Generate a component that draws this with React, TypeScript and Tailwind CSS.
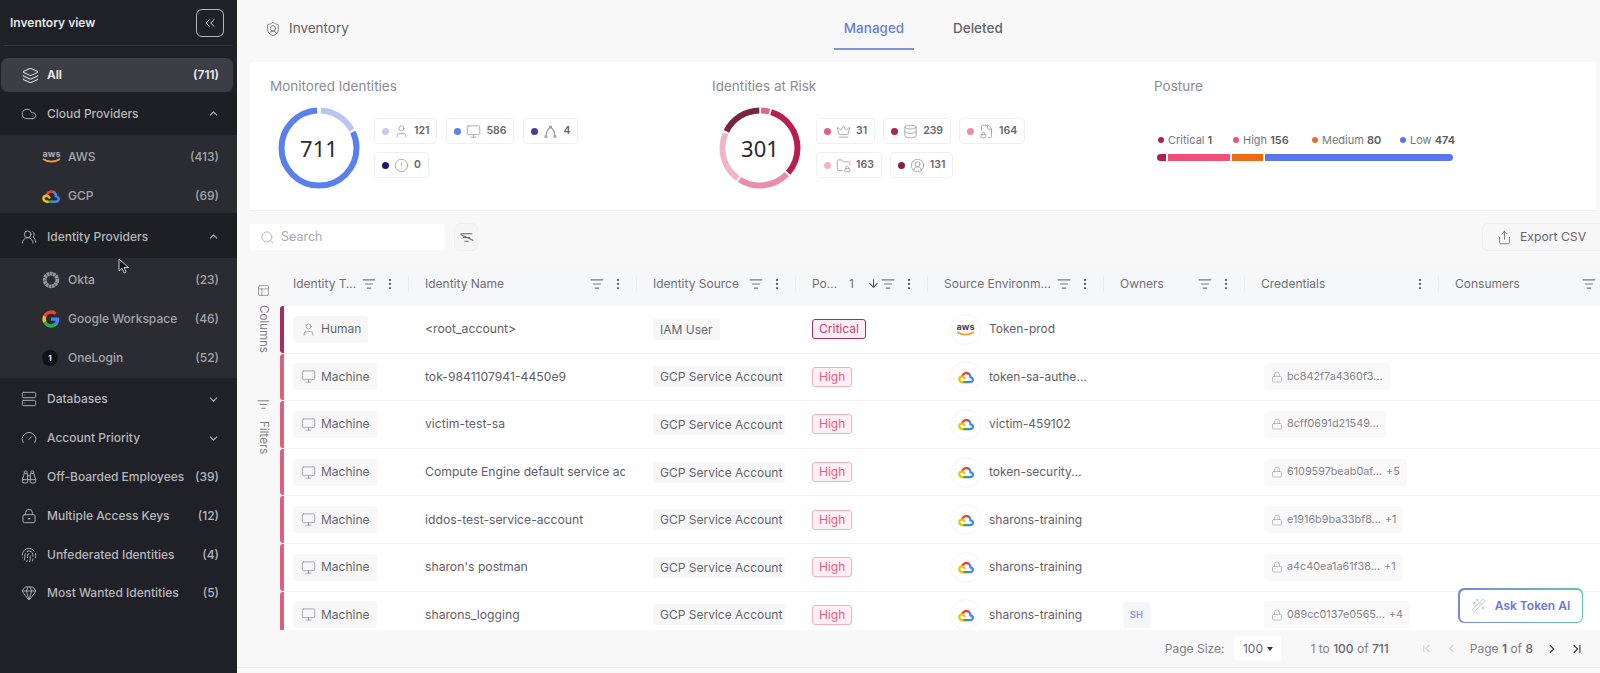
import type { ReactNode } from 'react'
import {
  ArrowDown,
  Binoculars,
  ChevronDown,
  ChevronFirst,
  ChevronLast,
  ChevronLeft,
  ChevronRight,
  ChevronsLeft,
  ChevronUp,
  CircleAlert,
  CircleUserRound,
  Cloud,
  Crown,
  Database,
  EllipsisVertical,
  FileLock2,
  Fingerprint,
  FolderLock,
  Gauge,
  Gem,
  Layers,
  ListFilter,
  Lock,
  LockKeyhole,
  Monitor,
  PanelsTopLeft,
  Search,
  Server,
  Share,
  ShieldUser,
  User,
  UsersRound,
  WandSparkles,
} from 'lucide-react'

function GcpLogo({ size = 18 }: { size?: number }) {
  return (
    <svg width={size} height={size} viewBox="0 0 24 24" fill="none" strokeWidth={3.4} strokeLinecap="round">
      <path d="M6.5 10A6.5 6.5 0 0 1 16.5 7.4" stroke="#ea4335" />
      <path d="M16.5 7.4C18 8.8 18.6 10.4 18.6 12.4C21.6 13 22.6 15 22.2 16.8C21.7 18.6 20 19.6 18 19.6H12.5" stroke="#4285f4" />
      <path d="M12.5 19.6H7" stroke="#34a853" />
      <path d="M7 19.6C3.8 19.6 1.8 17.4 2 15C2.3 12.6 4.2 11.4 6.2 11.6C8 11.8 9.2 12.8 9.8 14" stroke="#fbbc05" />
    </svg>
  )
}

function GoogleLogo() {
  return (
    <svg width={18} height={18} viewBox="0 0 24 24">
      <path fill="#4285f4" d="M23 12.3c0-.8-.1-1.600-.2-2.300H12v4.400h6.200a5.300 5.300 0 0 1-2.300 3.500v2.900h3.700c2.100-2 3.400-4.900 3.400-8.500z" />
      <path fill="#34a853" d="M12 23.500c3.100 0 5.700-1 7.600-2.800l-3.700-2.900c-1 .7-2.300 1.100-3.900 1.100-3 0-5.500-2-6.400-4.700H1.800v2.900A11.500 11.500 0 0 0 12 23.500z" />
      <path fill="#fbbc05" d="M5.600 14.200a6.900 6.900 0 0 1 0-4.400V6.900H1.800a11.500 11.500 0 0 0 0 10.200z" />
      <path fill="#ea4335" d="M12 5.100c1.700 0 3.200.6 4.400 1.700l3.300-3.300A11.100 11.100 0 0 0 12 .5 11.500 11.500 0 0 0 1.800 6.900l3.800 2.900C6.500 7.100 9 5.100 12 5.100z" />
    </svg>
  )
}

function AwsLogo({ dark }: { dark?: boolean }) {
  return (
    <span className="flex w-[19px] flex-col items-center leading-none">
      <span className={`text-[9px] font-bold leading-[8px] ${dark ? 'text-[#a9aaae]' : 'text-[#444]'}`}>aws</span>
      <svg width={19} height={5} viewBox="0 0 19 5" fill="none">
        <path d="M1 1C6 4.500 13 4.500 18 1" stroke="#f59e2c" strokeWidth={1.6} />
      </svg>
    </span>
  )
}

function OktaLogo() {
  return (
    <svg width={18} height={18} viewBox="0 0 18 18" fill="none">
      <circle cx={9} cy={9} r={6.300} stroke="#96979b" strokeWidth={3.800} strokeDasharray="2.500 0.600" />
    </svg>
  )
}

function OneLoginLogo() {
  return (
    <span className="flex h-[16px] w-[16px] items-center justify-center rounded-full bg-[#111216] text-[8px] font-bold text-white">
      1
    </span>
  )
}

function SidebarRow({
  icon,
  label,
  count,
  open,
  className = '',
}: {
  icon: ReactNode
  label: string
  count?: string
  open?: boolean
  className?: string
}) {
  return (
    <div className={`flex items-center pl-[21px] pr-[18px] text-[12px] font-medium text-[#b6b7bb] ${className}`}>
      <span className="flex w-[26px] shrink-0 items-center text-[#a9aaae]">{icon}</span>
      <span className="flex-1 whitespace-nowrap">{label}</span>
      {count && <span>{count}</span>}
      {open === true && <ChevronUp className="mr-[-1px] h-[13px] w-[13px]" />}
      {open === false && <ChevronDown className="mr-[-1px] h-[13px] w-[13px]" />}
    </div>
  )
}

function SubRow({ icon, label, count }: { icon: ReactNode; label: string; count: string }) {
  return (
    <div className="flex h-[39px] items-center pl-[42px] pr-[18px] text-[12px] font-medium text-[#a5a6aa]">
      <span className="flex w-[26px] shrink-0 items-center">{icon}</span>
      <span className="flex-1 whitespace-nowrap">{label}</span>
      <span>{count}</span>
    </div>
  )
}

function Sidebar() {
  const ic = 'h-[16px] w-[16px]'
  return (
    <aside className="relative h-full w-[237px] shrink-0 bg-[#202126]">
      <div className="mx-[4px] flex h-[46px] items-center justify-between border-b border-[#33343a] pl-[6px] pr-[9px] text-[12px] font-semibold text-[#e4e5e7]">
        <span>Inventory view</span>
        <button type="button" className="flex h-[28px] w-[28px] items-center justify-center rounded-[6px] border border-[#b5b6ba] text-[#d4d5d8]">
          <ChevronsLeft className="h-[16px] w-[16px]" strokeWidth={1.5} />
        </button>
      </div>
      <div className="px-px pt-[12px]">
        <div className="flex h-[34px] w-[232px] items-center rounded-[7px] bg-[#3c3d45] pl-[21px] pr-[14px] text-[12px] font-semibold text-[#f0f0f2]">
          <Layers className="mr-[8px] h-[17px] w-[17px] text-[#d6d7da]" strokeWidth={1.5} />
          <span className="flex-1">All</span>
          <span>(711)</span>
        </div>
      </div>
      <SidebarRow className="h-[43px] bg-[#1e1f23]" icon={<Cloud className={ic} strokeWidth={1.5} />} label="Cloud Providers" open />
      <div className="h-[78px] bg-[#2b2c31] pt-[2px]">
        <SubRow icon={<AwsLogo dark />} label="AWS" count="(413)" />
        <SubRow icon={<GcpLogo />} label="GCP" count="(69)" />
      </div>
      <SidebarRow className="h-[45px] bg-[#1e1f23] pt-[2px]" icon={<UsersRound className={ic} strokeWidth={1.5} />} label="Identity Providers" open />
      <div className="h-[120px] bg-[#2b2c31] pt-[2px]">
        <SubRow icon={<OktaLogo />} label="Okta" count="(23)" />
        <SubRow icon={<GoogleLogo />} label="Google Workspace" count="(46)" />
        <SubRow icon={<OneLoginLogo />} label="OneLogin" count="(52)" />
      </div>
      <div className="pt-[2px]">
        <SidebarRow className="h-[38.800px]" icon={<Server className={ic} strokeWidth={1.5} />} label="Databases" open={false} />
        <SidebarRow className="h-[38.800px]" icon={<Gauge className={ic} strokeWidth={1.5} />} label="Account Priority" open={false} />
        <SidebarRow className="h-[38.800px]" icon={<Binoculars className={ic} strokeWidth={1.5} />} label="Off-Boarded Employees" count="(39)" />
        <SidebarRow className="h-[38.800px]" icon={<LockKeyhole className={ic} strokeWidth={1.5} />} label="Multiple Access Keys" count="(12)" />
        <SidebarRow className="h-[38.800px]" icon={<Fingerprint className={ic} strokeWidth={1.5} />} label="Unfederated Identities" count="(4)" />
        <SidebarRow className="h-[38.800px]" icon={<Gem className={ic} strokeWidth={1.5} />} label="Most Wanted Identities" count="(5)" />
      </div>
      {/* mouse pointer caught in the screenshot */}
      <svg className="absolute left-[118px] top-[258px]" width={12} height={16} viewBox="0 0 12 16">
        <path d="M1 1V13L4 10.300L6.200 15L8.200 14L6 9.500H10.500Z" fill="#15161a" stroke="#c9cacd" strokeWidth={1} />
      </svg>
    </aside>
  )
}

function Donut({ value, segments }: { value: string; segments: { from: number; to: number; color: string }[] }) {
  return (
    <div className="relative h-[82px] w-[82px] shrink-0">
      <svg width={82} height={82} viewBox="0 0 82 82" fill="none" className="-rotate-90">
        {segments.map((s) => (
          <circle
            key={s.from}
            cx={41}
            cy={41}
            r={37.500}
            stroke={s.color}
            strokeWidth={6}
            pathLength={100}
            strokeDasharray={`${s.to - s.from} ${100 - (s.to - s.from)}`}
            strokeDashoffset={-s.from}
          />
        ))}
      </svg>
      <span className="absolute inset-0 flex items-center justify-center font-['Noto_Sans',sans-serif] text-[22px] text-[#2a2a2d]">
        {value}
      </span>
    </div>
  )
}

function StatChip({ dot, icon, value }: { dot: string; icon: ReactNode; value: string }) {
  return (
    <div className="flex h-[26px] items-center gap-[5px] rounded-[4px] border border-[#eeeff1] bg-white px-[7px] text-[10.500px] font-semibold text-[#66676b]">
      <span className={`h-[7px] w-[7px] rounded-full ${dot}`} />
      <span className="flex items-center text-[#9a9ba0]">{icon}</span>
      <span>{value}</span>
    </div>
  )
}

function BranchIcon() {
  return (
    <svg width={15} height={15} viewBox="0 0 15 15" fill="none" stroke="#9a9ba0" strokeWidth={1.200}>
      <path d="M3 12C3 7.500 5 5 7.500 3C10 5 12 7.500 12 12" />
      <circle cx={7.500} cy={3} r={1} />
      <circle cx={3} cy={12.500} r={1} />
      <circle cx={12} cy={12.500} r={1} />
    </svg>
  )
}

function SummaryCard() {
  const ic = 'h-[15px] w-[15px]'
  return (
    <section className="ml-[13px] mr-[4px] flex h-[149px] border-b border-[#eeeff1] bg-white pl-[20px]">
      <div className="w-[442px] pt-[15px]">
        <h3 className="text-[13.500px] leading-[18px] text-[#8b8c90]">Monitored Identities</h3>
        <div className="ml-[8px] mt-[12px] flex gap-[14px]">
          <Donut
            value="711"
            segments={[
              { from: 0.800, to: 17, color: '#b9c6f3' },
              { from: 18, to: 99.200, color: '#5a80ee' },
            ]}
          />
          <div className="flex w-[220px] flex-wrap content-start gap-x-[9px] gap-y-[8px] pt-[11px]">
            <StatChip dot="bg-[#c5cdf0]" icon={<User className={ic} strokeWidth={1.300} />} value="121" />
            <StatChip dot="bg-[#5a80ee]" icon={<Monitor className={ic} strokeWidth={1.300} />} value="586" />
            <StatChip dot="bg-[#3d429c]" icon={<BranchIcon />} value="4" />
            <StatChip dot="bg-[#1a1a6e]" icon={<CircleAlert className={ic} strokeWidth={1.300} />} value="0" />
          </div>
        </div>
      </div>
      <div className="w-[442px] pt-[15px]">
        <h3 className="text-[13.500px] leading-[18px] text-[#8b8c90]">Identities at Risk</h3>
        <div className="ml-[7px] mt-[12px] flex gap-[15px]">
          <Donut
            value="301"
            segments={[
              { from: 0.500, to: 4, color: '#d8668a' },
              { from: 4.800, to: 36.500, color: '#b81e50' },
              { from: 37.300, to: 59.200, color: '#e88fa8' },
              { from: 60, to: 81.500, color: '#f0b5c5' },
              { from: 82.300, to: 99.700, color: '#7a2440' },
            ]}
          />
          <div className="flex w-[220px] flex-wrap content-start gap-x-[8px] gap-y-[8px] pt-[11px]">
            <StatChip dot="bg-[#e0607f]" icon={<Crown className={ic} strokeWidth={1.300} />} value="31" />
            <StatChip dot="bg-[#b0204f]" icon={<Database className={ic} strokeWidth={1.300} />} value="239" />
            <StatChip dot="bg-[#e88fa8]" icon={<FileLock2 className={ic} strokeWidth={1.300} />} value="164" />
            <StatChip dot="bg-[#f0b5c5]" icon={<FolderLock className={ic} strokeWidth={1.300} />} value="163" />
            <StatChip dot="bg-[#7a2440]" icon={<CircleUserRound className={ic} strokeWidth={1.300} />} value="131" />
          </div>
        </div>
      </div>
      <div className="flex-1 pt-[15px]">
        <h3 className="text-[13.500px] leading-[18px] text-[#8b8c90]">Posture</h3>
        <div className="ml-[3px] mt-[38px] flex h-[14px] items-center text-[11px] text-[#77787c]">
          <span className="ml-[1px] h-[6px] w-[6px] rounded-full bg-[#b0204f]" />
          <span className="ml-[4px] w-[65px]">Critical <b className="font-semibold text-[#5c5d61]">1</b></span>
          <span className="h-[6px] w-[6px] rounded-full bg-[#e8557c]" />
          <span className="ml-[4px] w-[69px]">High <b className="font-semibold text-[#5c5d61]">156</b></span>
          <span className="h-[6px] w-[6px] rounded-full bg-[#ee6a24]" />
          <span className="ml-[4px] w-[78px]">Medium <b className="font-semibold text-[#5c5d61]">80</b></span>
          <span className="h-[6px] w-[6px] rounded-full bg-[#5a74ee]" />
          <span className="ml-[4px]">Low <b className="font-semibold text-[#5c5d61]">474</b></span>
        </div>
        <div className="ml-[3px] mt-[7px] flex h-[7px] w-[296px] gap-[2px]">
          <span className="w-[9px] rounded-l-full bg-[#b0204f]" />
          <span className="w-[62px] bg-[#ef4f78]" />
          <span className="w-[31px] bg-[#ee6a14]" />
          <span className="flex-1 rounded-r-full bg-[#5a78ee]" />
        </div>
      </div>
    </section>
  )
}

function HeaderCell({
  label,
  filter = true,
  extra,
  menu = true,
  first,
}: {
  label: string
  filter?: boolean
  extra?: ReactNode
  menu?: boolean
  first?: boolean
}) {
  return (
    <div className={`flex min-w-0 items-center pr-[4px] ${first ? 'pl-[13px]' : 'pl-[12px]'}`}>
      <span className="min-w-0 flex-1 truncate text-[12px] text-[#6f7074]">{label}</span>
      {extra}
      {filter && <ListFilter className="ml-px h-[14px] w-[14px] shrink-0 text-[#77787c]" />}
      {menu && (
        <>
          <EllipsisVertical className="ml-[7px] h-[14px] w-[14px] shrink-0 text-[#66676b]" />
          <span className="ml-[11px] h-[16px] w-px shrink-0 bg-[#eceded]" />
        </>
      )}
    </div>
  )
}

type Row = {
  type: 'Human' | 'Machine'
  name: string
  source: string
  posture: 'Critical' | 'High'
  cloud: 'aws' | 'gcp'
  env: string
  owner?: string
  cred?: string
  more?: string
}

const gsa = 'GCP Service Account'
const rows: Row[] = [
  { type: 'Human', name: '<root_account>', source: 'IAM User', posture: 'Critical', cloud: 'aws', env: 'Token-prod' },
  { type: 'Machine', name: 'tok-9841107941-4450e9', source: gsa, posture: 'High', cloud: 'gcp', env: 'token-sa-authentication', cred: 'bc842f7a4360f3...' },
  { type: 'Machine', name: 'victim-test-sa', source: gsa, posture: 'High', cloud: 'gcp', env: 'victim-459102', cred: '8cff0691d21549...' },
  { type: 'Machine', name: 'Compute Engine default service account', source: gsa, posture: 'High', cloud: 'gcp', env: 'token-security-training', cred: '6109597beab0af...', more: '+5' },
  { type: 'Machine', name: 'iddos-test-service-account', source: gsa, posture: 'High', cloud: 'gcp', env: 'sharons-training', cred: 'e1916b9ba33bf8...', more: '+1' },
  { type: 'Machine', name: "sharon's postman", source: gsa, posture: 'High', cloud: 'gcp', env: 'sharons-training', cred: 'a4c40ea1a61f38...', more: '+1' },
  { type: 'Machine', name: 'sharons_logging', source: gsa, posture: 'High', cloud: 'gcp', env: 'sharons-training', owner: 'SH', cred: '089cc0137e0565...', more: '+4' },
]

const gridCols = 'grid grid-cols-[133px_228px_159px_132px_176px_141px_194px_1fr]'

function TableRow({ row }: { row: Row }) {
  const critical = row.posture === 'Critical'
  return (
    <div className={`relative h-[47.600px] items-center border-b border-[#f0f1f2] bg-white ${gridCols}`}>
      <span className={`absolute inset-y-0 left-0 w-[3.500px] rounded-l-[3px] ${critical ? 'bg-[#a42d5f]' : 'bg-[#dd5f7e]'}`} />
      <div className="flex items-center pl-[13px]">
        <span className="flex h-[27px] items-center gap-[5px] rounded-[4px] bg-[#f7f7f8] pl-[8px] pr-[7px] text-[12px] text-[#66676b]">
          {row.type === 'Human' ? (
            <User className="h-[15px] w-[15px] text-[#98999d]" strokeWidth={1.300} />
          ) : (
            <Monitor className="h-[15px] w-[15px] text-[#98999d]" strokeWidth={1.300} />
          )}
          {row.type}
        </span>
      </div>
      <div className="mr-[16px] overflow-hidden whitespace-nowrap pl-[12px] text-[12.200px] text-[#5f6064]">{row.name}</div>
      <div className="flex items-center pl-[12px]">
        <span className="h-[21px] max-w-[132px] overflow-hidden whitespace-nowrap rounded-[3px] bg-[#f7f7f8] px-[7px] text-[12px] leading-[21px] text-[#66676b]">
          {row.source}
        </span>
      </div>
      <div className="flex items-center pl-[12px]">
        <span
          className={`flex h-[20px] items-center rounded-[3px] border px-[6px] text-[12px] ${
            critical ? 'border-[#a42d5f] bg-[#fdeef3] text-[#c2456f]' : 'border-[#f3aebf] bg-[#fff0f3] text-[#e2607f]'
          }`}
        >
          {row.posture}
        </span>
      </div>
      <div className="flex items-center gap-[8px] pl-[18px]">
        <span className="flex h-[31px] w-[31px] shrink-0 items-center justify-center rounded-full border border-[#f6f6f7]">
          {row.cloud === 'aws' ? <AwsLogo /> : <GcpLogo size={16} />}
        </span>
        <span className="max-w-[98px] truncate text-[12px] text-[#5f6064]">{row.env}</span>
      </div>
      <div className="pl-[15px]">
        {row.owner && (
          <span className="flex h-[26px] w-[27px] items-center justify-center rounded-[3px] bg-[#f5f6fb] text-[9.500px] font-semibold text-[#8a98dc]">
            {row.owner}
          </span>
        )}
      </div>
      <div className="flex items-center pl-[15px]">
        {row.cred && (
          <span className="flex h-[27px] items-center gap-[4px] rounded-[4px] bg-[#f9f9fa] px-[7px] text-[10.800px] text-[#85868a]">
            <Lock className="h-[12px] w-[12px] text-[#a5a6aa]" strokeWidth={1.300} />
            {row.cred}
            {row.more && <span>{row.more}</span>}
          </span>
        )}
      </div>
      <div />
    </div>
  )
}

function InventoryTable() {
  return (
    <div className="ml-[13px] mt-[13px] flex h-[366px] overflow-hidden">
      <div className="flex w-[30px] shrink-0 flex-col items-center pr-[4px] pt-[20px] text-[11.500px] text-[#808185]">
        <PanelsTopLeft className="h-[13px] w-[13px]" strokeWidth={1.400} />
        <span className="mt-[8px] [writing-mode:vertical-rl]">Columns</span>
        <ListFilter className="mt-[45px] h-[13px] w-[13px]" />
        <span className="mt-[10px] [writing-mode:vertical-rl]">Filters</span>
      </div>
      <div className="min-w-0 flex-1">
        <div className={`h-[42px] items-center bg-[#f6f7f8] pb-[3px] ${gridCols}`}>
          <HeaderCell first label="Identity Type" />
          <HeaderCell label="Identity Name" />
          <HeaderCell label="Identity Source" />
          <HeaderCell
            label="Posture"
            extra={
              <>
                <span className="ml-[9px] mr-[13px] text-[12px] text-[#6f7074]">1</span>
                <ArrowDown className="h-[13px] w-[13px] text-[#55565a]" />
              </>
            }
          />
          <HeaderCell label="Source Environment" />
          <HeaderCell label="Owners" />
          <HeaderCell label="Credentials" filter={false} />
          <HeaderCell label="Consumers" menu={false} />
        </div>
        {rows.map((row) => (
          <TableRow key={row.name} row={row} />
        ))}
      </div>
    </div>
  )
}

function Pagination() {
  return (
    <footer className="flex h-[38px] items-center justify-end border-b border-[#eeeff1] pr-[16px] text-[12px] text-[#808185]">
      <span>Page Size:</span>
      <span className="ml-[10px] flex h-[25px] w-[47px] items-center justify-center gap-[4px] rounded-[3px] bg-white text-[#66676b]">
        100
        <span className="h-0 w-0 border-x-[3.500px] border-t-[4px] border-x-transparent border-t-[#333]" />
      </span>
      <span className="ml-[29px]">
        1 to <b className="font-medium text-[#66676b]">100</b> of <b className="font-medium text-[#66676b]">711</b>
      </span>
      <ChevronFirst className="ml-[31px] h-[13px] w-[13px] text-[#d3d4d7]" />
      <ChevronLeft className="ml-[12px] h-[13px] w-[13px] text-[#d3d4d7]" />
      <span className="ml-[12px]">
        Page <b className="font-semibold text-[#66676b]">1</b> of <b className="font-medium text-[#66676b]">8</b>
      </span>
      <ChevronRight className="ml-[12px] h-[14px] w-[14px] text-[#3c3d41]" />
      <ChevronLast className="ml-[11px] h-[14px] w-[14px] text-[#3c3d41]" />
    </footer>
  )
}

export default function App() {
  return (
    <div className="flex h-[673px] w-[1600px] overflow-hidden bg-[#f8f8f9] font-[Inter,sans-serif]">
      <Sidebar />
      <main className="relative min-w-0 flex-1">
        <header className="flex h-[62px] items-start pl-[28px] pt-[8px]">
          <div className="flex h-[41px] w-[569px] items-center gap-[8px] text-[13.500px] text-[#5f6064]">
            <ShieldUser className="h-[16px] w-[16px] text-[#77787c]" strokeWidth={1.400} />
            Inventory
          </div>
          <button type="button" className="h-[42px] w-[80px] border-b-2 border-[#8494dc] text-[13.500px] font-medium text-[#6a80d8]">
            Managed
          </button>
          <button type="button" className="ml-[39px] h-[41px] text-[13.500px] font-medium text-[#636468]">
            Deleted
          </button>
        </header>
        <SummaryCard />
        <div className="ml-[13px] mt-[12px] flex h-[28px] items-center">
          <div className="flex h-[26px] w-[195px] items-center gap-[6px] rounded-[3px] bg-white pl-[10px] text-[12.500px] text-[#a8a9ad]">
            <Search className="h-[15px] w-[15px]" strokeWidth={1.300} />
            Search
          </div>
          <button type="button" className="relative ml-[9px] flex h-[28px] w-[24px] items-center justify-center rounded-[6px] border border-[#f0f0f1] bg-[#f5f5f6] text-[#66676b]">
            <ListFilter className="h-[13px] w-[13px]" />
            <span className="absolute left-[5px] top-[13px] h-px w-[14px] rotate-[25deg] bg-[#66676b]" />
          </button>
          <button type="button" className="ml-auto flex h-[28px] w-[118px] items-center gap-[8px] rounded-l-[6px] border border-r-0 border-[#eeeff1] bg-[#f7f7f8] pl-[14px] text-[12.200px] text-[#66676b]">
            <Share className="h-[15px] w-[15px]" strokeWidth={1.300} />
            Export CSV
          </button>
        </div>
        <InventoryTable />
        <Pagination />
        <button
          type="button"
          className="absolute left-[1221px] top-[588px] h-[35px] w-[125px] rounded-[6px] bg-gradient-to-r from-[#7d86d8] to-[#62c3b4] p-[1.500px]"
        >
          <span className="flex h-full w-full items-center justify-center gap-[9px] rounded-[5px] bg-white text-[12px] font-semibold text-[#6b76d6]">
            <WandSparkles className="h-[15px] w-[15px] text-[#b6b9ec]" strokeWidth={1.400} />
            Ask Token AI
          </span>
        </button>
      </main>
    </div>
  )
}
